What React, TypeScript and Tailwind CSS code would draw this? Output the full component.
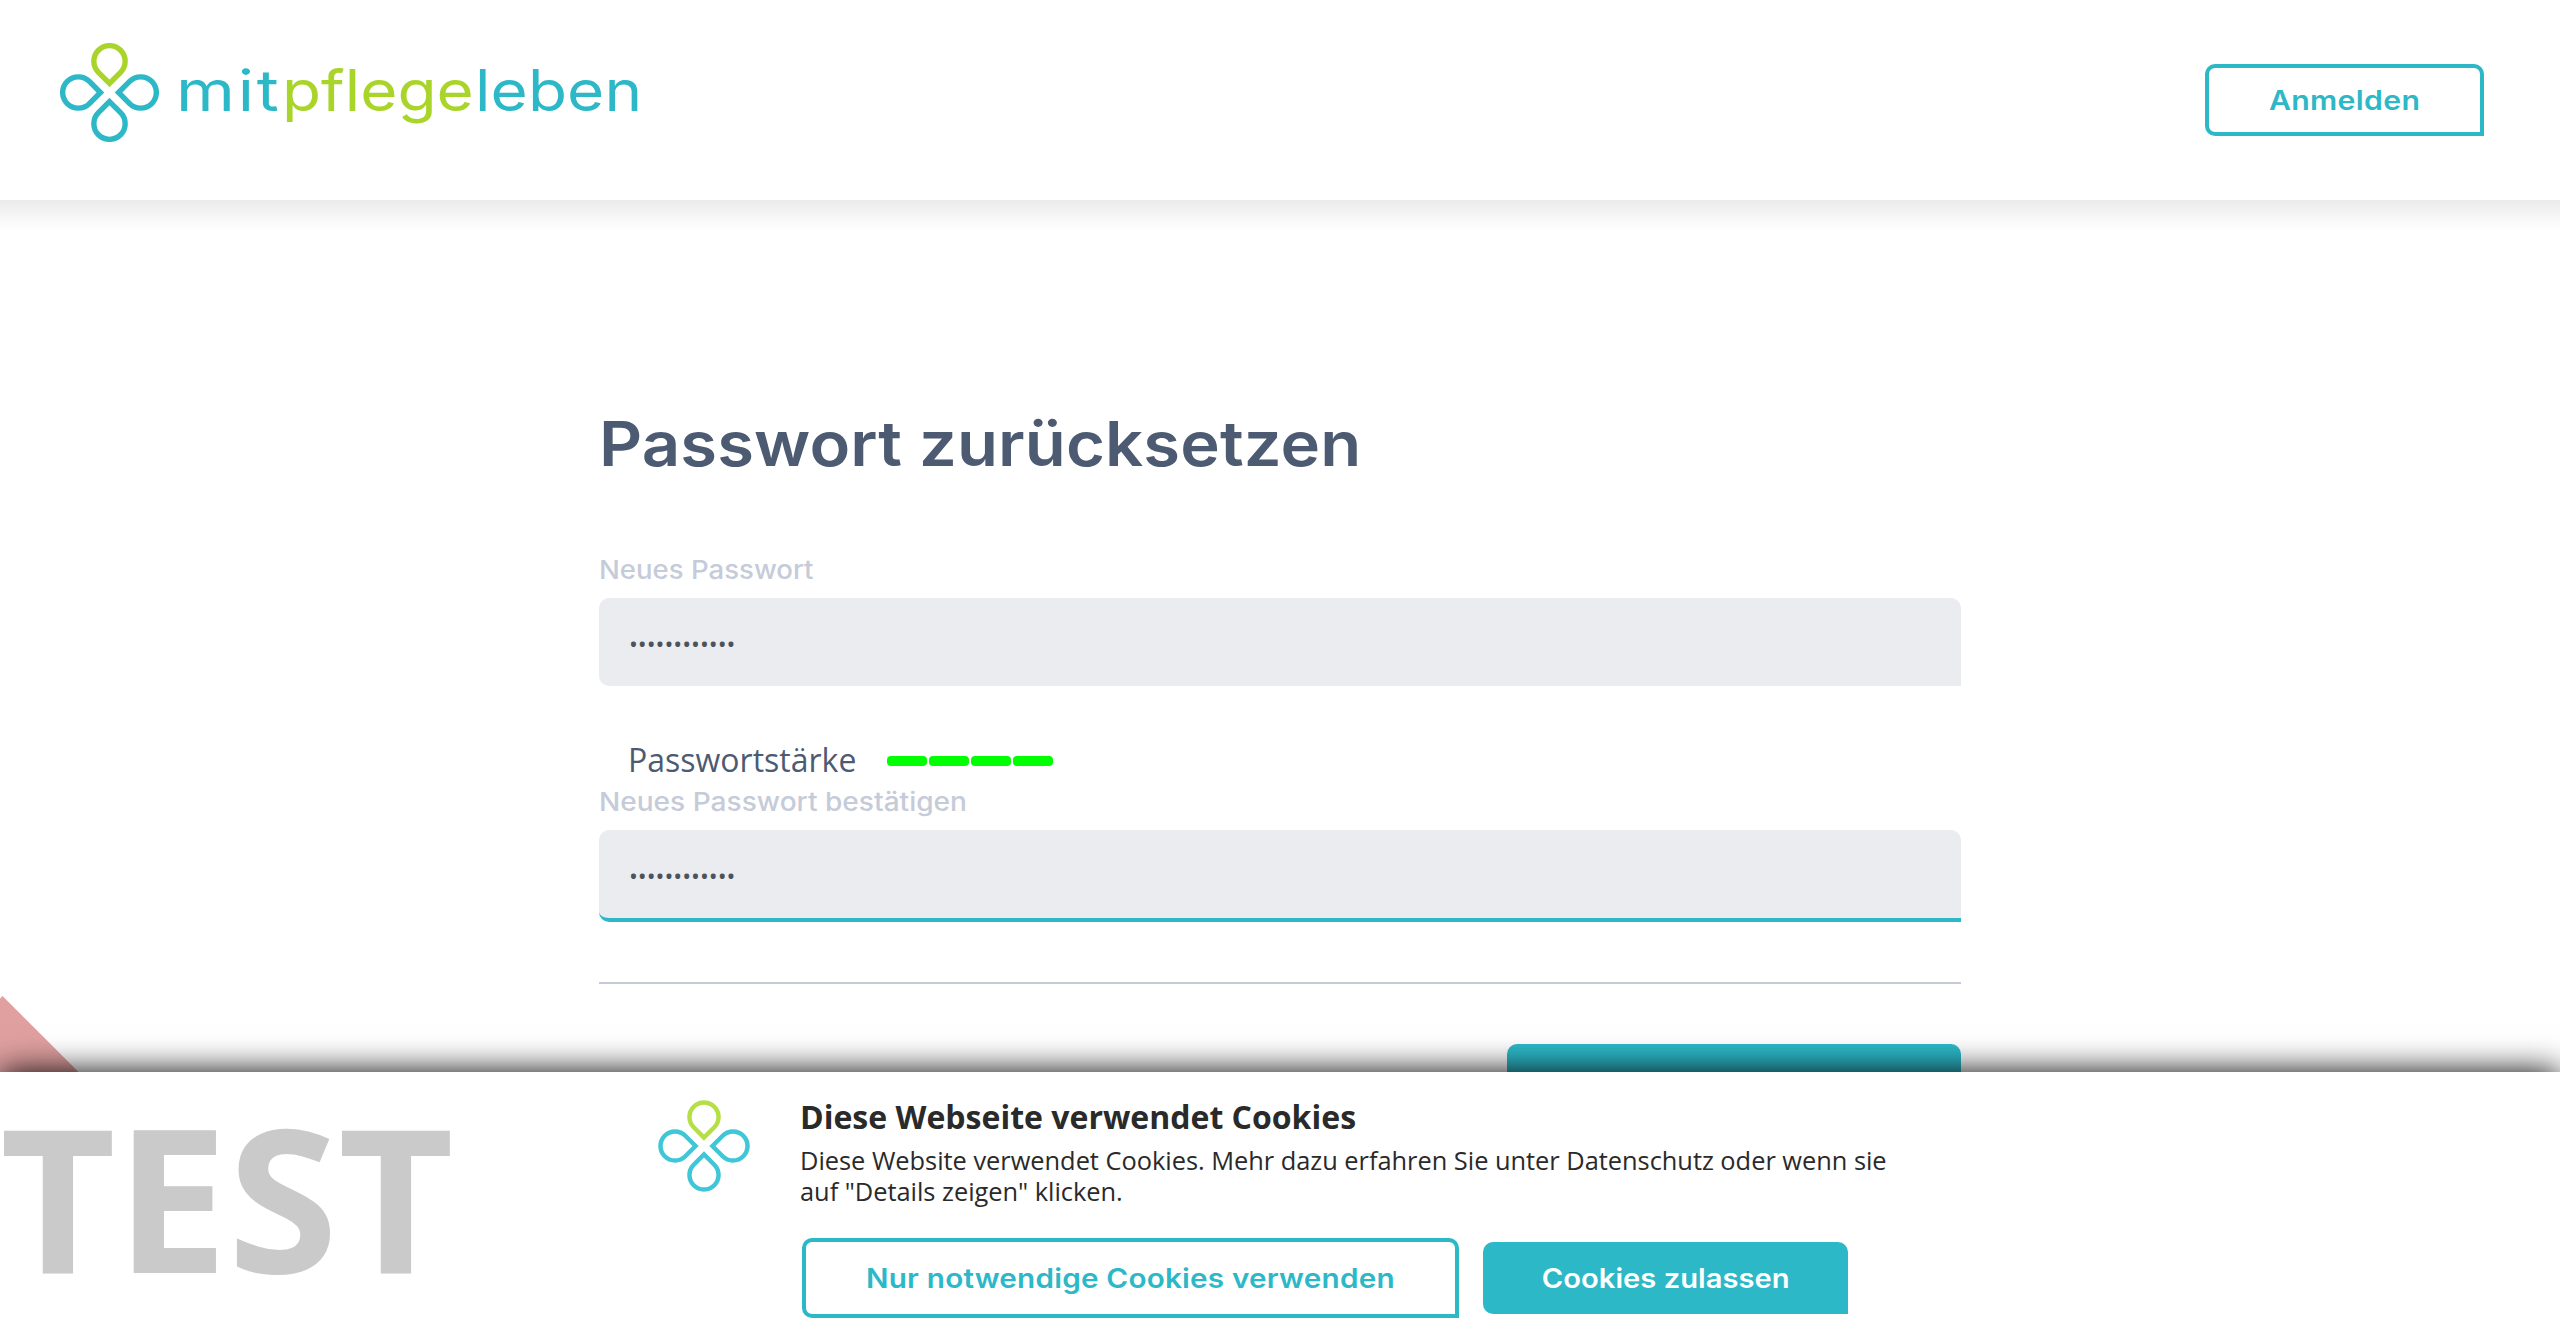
import type { ReactNode } from "react";

const PETAL = "M0 22.13 L-11.07 11.07 A15.65 15.65 0 1 1 11.07 11.07 Z";

function Clover({ className, stroke, green, teal }: { className: string; stroke: number; green: string; teal: string }) {
  const petals = [
    { angle: 0, color: green },
    { angle: 90, color: teal },
    { angle: 180, color: teal },
    { angle: 270, color: teal },
  ];
  return (
    <svg className={className} viewBox="-49.5 -49.5 99 99" fill="none" strokeWidth={stroke} aria-hidden="true">
      {petals.map((p) => (
        <g key={p.angle} transform={`rotate(${p.angle}) translate(0 -31.2)`}>
          <path d={PETAL} stroke={p.color} />
        </g>
      ))}
    </svg>
  );
}

function Label({ children, stretch }: { children: ReactNode; stretch: string }) {
  return (
    <label className={`block origin-left font-['Inter',sans-serif] text-[26px] leading-[36px] font-medium text-[#c5cbd8] ${stretch}`}>
      {children}
    </label>
  );
}

function PasswordField({ focused = false }: { focused?: boolean }) {
  return (
    <div
      className={`mt-[10px] rounded-[10px] rounded-br-none bg-[#ebecf0] pt-1 pl-[30px] text-[23.6px] leading-[84px] text-[#4b545c] ${
        focused ? "border-b-4 border-[#2db8c8]" : ""
      }`}
    >
      ••••••••••••
    </div>
  );
}

export default function App() {
  return (
    <div className="relative h-[1330px] w-[2560px] overflow-hidden bg-white font-['Open_Sans',sans-serif]">
      <header className="flex h-[200px] items-start justify-between pr-[76px] pl-[60px]">
        <div className="flex pt-[43px]">
          <Clover className="size-[99px]" stroke={5.4} green="#a9d42a" teal="#2db8c8" />
          <div className="ml-[17px] flex font-['Inter',sans-serif] text-[57px] leading-[96px] text-[#2db8c8]">
            <span className="w-[106px] origin-left scale-x-118 tracking-[2.3px]">mit</span>
            <span className="w-[193px] origin-left scale-x-112 text-[#a9d42a]">pflege</span>
            <span className="origin-left scale-x-112 tracking-[0.1px]">leben</span>
          </div>
        </div>
        <button className="mt-[64px] flex h-[72px] w-[279px] items-center justify-center rounded-[10px] rounded-br-none border-4 border-[#2db8c8] pt-0.5 font-['Inter',sans-serif] text-[27px] font-semibold text-[#2db8c8]">
          <span className="scale-x-112 tracking-[0.3px]">Anmelden</span>
        </button>
      </header>
      <div className="h-[30px] bg-linear-to-b from-[#ebebeb] to-white" />

      <main className="mx-auto w-[1362px] pt-[174px]">
        <h1 className="origin-left scale-x-108 font-['Inter',sans-serif] text-[62px] leading-[80px] font-semibold tracking-[0.11px] text-[#4c5b72]">
          Passwort zurücksetzen
        </h1>
        <div className="mt-[68px]">
          <Label stretch="scale-x-106">Neues Passwort</Label>
          <PasswordField />
        </div>
        <div className="mt-[52px] flex items-center pl-[29px]">
          <span className="w-[259px] text-[32px] leading-[44px] text-[#4c5b72]">Passwortstärke</span>
          <div className="flex gap-[2px] pt-[2px]">
            <span className="h-[10px] w-[40px] rounded-[4px] bg-[#00ff00]" />
            <span className="h-[10px] w-[40px] rounded-[4px] bg-[#00ff00]" />
            <span className="h-[10px] w-[40px] rounded-[4px] bg-[#00ff00]" />
            <span className="h-[10px] w-[40px] rounded-[4px] bg-[#00ff00]" />
          </div>
        </div>
        <div className="mt-[2px]">
          <Label stretch="scale-x-108">Neues Passwort bestätigen</Label>
          <PasswordField focused />
        </div>
        <div className="mt-[60px] h-[2px] bg-[#c5cad8]" />
        <div className="mt-[60px] ml-auto h-[88px] w-[454px] rounded-[10px] rounded-br-none bg-[#2db8c8]" />
      </main>

      <svg className="absolute top-[996px] left-0 h-[76px] w-[79px]" viewBox="0 0 79 76" aria-hidden="true">
        <polygon points="0,2.5 2.5,0 78.5,76 0,76" fill="#e0a0a0" />
      </svg>

      <section className="absolute bottom-0 left-0 flex h-[258px] w-full items-start bg-white shadow-[0_0_32px_#000]">
        <div className="w-[658px] text-[200px] leading-[247px] font-bold text-[#cacaca]">TEST</div>
        <Clover className="mt-[28px] size-[92px]" stroke={4.8} green="#b6df45" teal="#3fc6d7" />
        <div className="ml-[50px] pt-[23px] text-[#2a2a2a]">
          <h2 className="text-[32px] leading-[44px] font-bold">Diese Webseite verwendet Cookies</h2>
          <p className="mt-[6px] w-[1110px] text-[25.4px] leading-[31.3px] tracking-[-0.02px]">
            Diese Website verwendet Cookies. Mehr dazu erfahren Sie unter Datenschutz oder wenn sie
            <br />
            auf "Details zeigen" klicken.
          </p>
          <div className="mt-[30.4px] ml-[2px] flex items-center gap-6 font-['Inter',sans-serif] text-[27px] font-semibold">
            <button className="flex h-[80px] w-[657px] items-center justify-center rounded-[10px] rounded-br-none border-4 border-[#2db8c8] pt-0.5 text-[#2db8c8]">
              <span className="scale-x-110 tracking-[0.18px]">Nur notwendige Cookies verwenden</span>
            </button>
            <button className="flex h-[72px] w-[365px] items-center justify-center rounded-[10px] rounded-br-none bg-[#2db8c8] pt-0.5 text-white">
              <span className="scale-x-108">Cookies zulassen</span>
            </button>
          </div>
        </div>
      </section>
    </div>
  );
}
